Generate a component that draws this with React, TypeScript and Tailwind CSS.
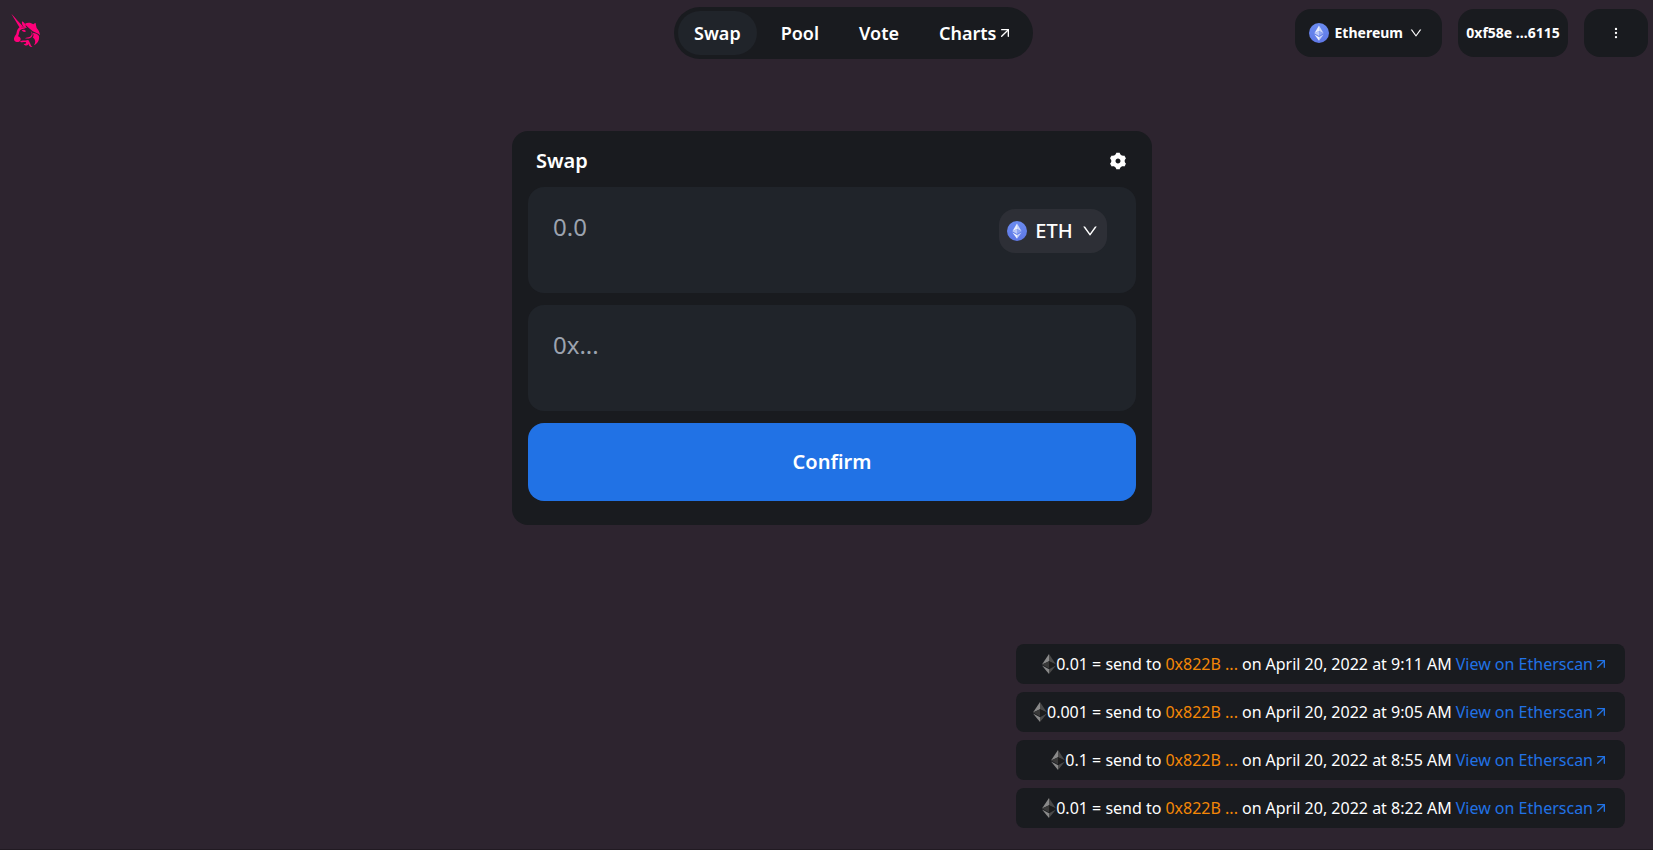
import { useId } from "react";
import { FiArrowUpRight } from "react-icons/fi";
import { AiOutlineDown } from "react-icons/ai";
import { HiOutlineDotsVertical } from "react-icons/hi";
import { RiSettings3Fill } from "react-icons/ri";

function UnicornLogo() {
  return (
    <svg viewBox="24 39 108 120" className="h-10 w-9" fill="#ff007a" aria-hidden="true">
      {/* horn */}
      <path d="M34 41 C45 52 57 66 65 80 L60 84 C51 70 42 54 34 41 Z" />
      <path d="M49 60 C57 66 64 73 69 80 L65 82 C60 74 55 67 49 60 Z" />
      {/* ear */}
      <path d="M66 64 C73 67 77 74 78 81 L71 81 C67 77 65 71 66 64 Z" />
      {/* crest and upper mane lock */}
      <path d="M74 72 C83 66 93 68 100 73 C101 71 104 70 107 69 C107 74 109 79 110 84 C115 89 119 96 120 106 C111 97 101 97 95 91 C89 86 81 79 74 72 Z" />
      {/* lower mane lock */}
      <path d="M98 98 C107 99 113 102 117 108 C119 118 114 130 102 136 C108 127 107 119 98 112 C102 108 101 103 98 98 Z" />
      {/* cheek line */}
      <path d="M92 94 C97 100 96 107 90 110 C84 113 79 111 75 115 C80 116 87 116 92 113 C101 108 99 98 92 94 Z" />
      {/* face and muzzle */}
      <path d="M60 81 C66 83 73 81 81 81 C77 87 66 85 60 91 C56 97 58 103 54 109 C59 110 63 114 62 119 C61 124 55 127 50 126 C44 125 41 121 42 115 C43 109 50 104 50 97 C51 90 54 84 60 81 Z" />
      {/* eye */}
      <path d="M65 91 C70 88 76 89 78 94 C74 97 69 96 65 91 Z" />
      {/* chin and beard curls */}
      <path d="M60 125 C67 119 75 123 83 120 C91 122 89 132 82 136 C77 138 72 135 71 132 C76 133 80 130 78 127 C75 124 67 129 60 125 Z" />
      <path d="M86 126 C93 128 90 137 98 141 C90 142 84 137 86 126 Z" />
    </svg>
  );
}

function EthBadge() {
  const id = useId();
  return (
    <svg viewBox="0 0 20 20" className="size-5 shrink-0" aria-hidden="true">
      <defs>
        <linearGradient id={id} x1="0" y1="0" x2="0" y2="1">
          <stop offset="0" stopColor="#6a8bf0" />
          <stop offset="1" stopColor="#5f78e6" />
        </linearGradient>
      </defs>
      <circle cx="10" cy="10" r="10" fill={`url(#${id})`} />
      <path d="M10 2.4 5.4 10.2 10 8Z" fill="#e9eefd" />
      <path d="M10 2.4 14.6 10.2 10 8Z" fill="#cbd6fa" />
      <path d="M5.4 10.2 10 8v5Z" fill="#bccaf8" />
      <path d="M14.6 10.2 10 8v5Z" fill="#8ea4f1" />
      <path d="M5.4 11.4 10 14v3.8Z" fill="#eef2fe" />
      <path d="M14.6 11.4 10 14v3.8Z" fill="#c4d0f9" />
    </svg>
  );
}

function EthDiamond() {
  return (
    <svg viewBox="0 0 14 20" className="h-5 w-[14px] shrink-0" aria-hidden="true">
      <path d="M7 0 0 10.4 7 7.2Z" fill="#8a8a8a" />
      <path d="M7 0 14 10.4 7 7.2Z" fill="#4a4a4a" />
      <path d="M0 10.4 7 7.2V14.4Z" fill="#393939" />
      <path d="M14 10.4 7 7.2V14.4Z" fill="#1c1c1c" />
      <path d="M0 11.4 7 15.2V20Z" fill="#8a8a8a" />
      <path d="M14 11.4 7 15.2V20Z" fill="#4a4a4a" />
    </svg>
  );
}

const navItems = ["Swap", "Pool", "Vote", "Charts"];

const transactions = [
  { amount: "0.01", date: "April 20, 2022 at 9:11 AM" },
  { amount: "0.001", date: "April 20, 2022 at 9:05 AM" },
  { amount: "0.1", date: "April 20, 2022 at 8:55 AM" },
  { amount: "0.01", date: "April 20, 2022 at 8:22 AM" },
];

function Header() {
  return (
    <header className="flex items-center pr-[5px]">
      <div className="w-1/4 pl-2">
        <UnicornLogo />
      </div>
      <nav className="flex flex-1 justify-center py-[7px]">
        <div className="flex gap-2 rounded-full bg-[#191b1f] p-1">
          {navItems.map((item) => (
            <a
              key={item}
              href="#"
              className={
                item === "Swap"
                  ? "flex items-center rounded-full bg-[#20242a] px-4 py-2 text-lg font-semibold"
                  : "flex items-center rounded-full px-4 py-2 text-lg font-semibold"
              }
            >
              {item}
              {item === "Charts" && <FiArrowUpRight className="size-4" />}
            </a>
          ))}
        </div>
      </nav>
      <div className="flex h-12 gap-4 text-sm font-bold">
        <button type="button" className="flex items-center gap-[6px] rounded-2xl bg-[#191b1f] pr-[19px] pl-[14px]">
          <EthBadge />
          Ethereum
          <AiOutlineDown className="size-[14px]" />
        </button>
        <button type="button" className="min-w-[110px] rounded-2xl bg-[#191b1f] px-2">
          0xf58e ...6115
        </button>
        <button
          type="button"
          aria-label="More options"
          className="flex w-16 items-center justify-center rounded-2xl bg-[#191b1f]"
        >
          <HiOutlineDotsVertical className="size-[14px]" />
        </button>
      </div>
    </header>
  );
}

function SwapCard() {
  return (
    <form className="w-full max-w-[640px] rounded-2xl bg-[#191b1f] px-4 pb-6">
      <div className="flex h-14 items-center justify-between px-2 pt-1">
        <h1 className="text-xl font-semibold">Swap</h1>
        <button type="button" aria-label="Settings">
          <RiSettings3Fill className="size-5" />
        </button>
      </div>
      <div className="flex flex-col gap-3">
        <div className="flex h-[106px] items-start justify-between rounded-2xl bg-[#20242a] px-[25px] py-[22px]">
          <input
            aria-label="Amount"
            placeholder="0.0"
            className="h-[34px] min-w-0 flex-1 bg-transparent text-2xl outline-none placeholder:text-[#9ca3af]"
          />
          <button
            type="button"
            className="mr-1 flex h-11 min-w-[108px] items-center justify-between gap-2 rounded-2xl bg-[#2d2f36] px-2 text-xl font-medium"
          >
            <EthBadge />
            ETH
            <AiOutlineDown className="size-[18px]" />
          </button>
        </div>
        <div className="flex h-[106px] items-start rounded-2xl bg-[#20242a] px-[25px] py-[22px]">
          <input
            aria-label="Recipient address"
            placeholder="0x..."
            className="h-[34px] min-w-0 flex-1 bg-transparent text-2xl outline-none placeholder:text-[#9ca3af]"
          />
        </div>
        <button type="submit" className="h-[78px] rounded-2xl bg-[#2172e5] text-xl font-semibold">
          Confirm
        </button>
      </div>
    </form>
  );
}

function History() {
  return (
    <ul className="flex w-full max-w-[609px] flex-col gap-2">
      {transactions.map((tx) => (
        <li
          key={tx.date}
          className="flex h-10 items-center justify-end gap-1 rounded-lg bg-[#191b1f] px-4 whitespace-nowrap"
        >
          <span className="flex items-center">
            <EthDiamond />
            {tx.amount} = send to
          </span>
          <span className="text-[#f48706]">0x822B ...</span>
          <span>on</span>
          <span>{tx.date}</span>
          <a href="#" className="flex items-center text-[#2172e5]">
            View on Etherscan
            <FiArrowUpRight className="size-4" />
          </a>
        </li>
      ))}
    </ul>
  );
}

export default function App() {
  return (
    <div className="flex min-h-screen flex-col border-b border-[#211a22] bg-[#2d242f] font-['Noto_Sans',sans-serif] text-white">
      <Header />
      <main className="flex flex-1 flex-col">
        <div className="flex justify-center pt-[65px] pl-[11px]">
          <SwapCard />
        </div>
        <div className="mt-auto flex justify-end pr-7 pb-[21px]">
          <History />
        </div>
      </main>
    </div>
  );
}
